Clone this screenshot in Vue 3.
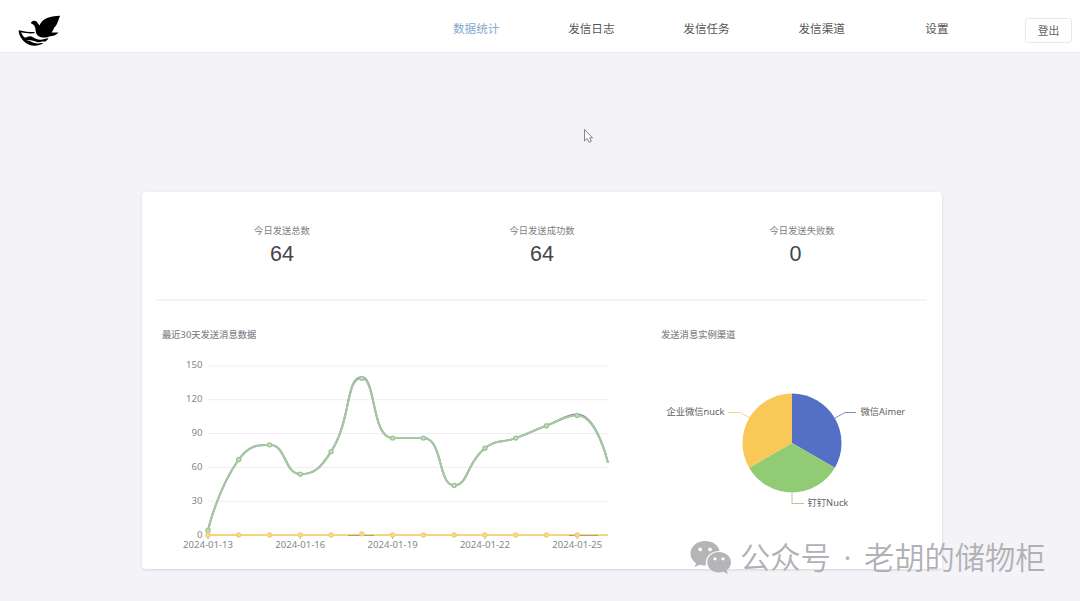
<script setup>
import { ref } from 'vue'

const menus = ['数据统计', '发信日志', '发信任务', '发信渠道', '设置']
const active = ref('数据统计')

const stats = [
  { label: '今日发送总数', value: 64 },
  { label: '今日发送成功数', value: 64 },
  { label: '今日发送失败数', value: 0, narrow: true }
]

const success = [4, 67, 80, 54, 74, 139, 86, 86, 44, 77, 86, 97, 106, 64]
const total = [4, 67, 80, 54, 74, 140, 86, 86, 44, 77, 86, 97, 107, 64]
const failed = [0, 0, 0, 0, 0, 1, 0, 0, 0, 0, 0, 0, 0, 0]
const failedLine = failed.map(() => 0)
const yTicks = [150, 120, 90, 60, 30, 0]
const xTicks = ['2024-01-13', '2024-01-16', '2024-01-19', '2024-01-22', '2024-01-25']

const px = (i) => 46 + i * 30.77
const py = (v) => 184 - v * 1.127
const toPoints = (list) => list.map((v, i) => ({ x: px(i), y: py(v) }))
const clamp = (v, a, b) => Math.max(Math.min(a, b), Math.min(v, Math.max(a, b)))

// smooth curve whose control points never overshoot the neighbours
const smoothPath = (list) => {
  const p = toPoints(list)
  let d = `M${p[0].x} ${p[0].y}`
  let cp = p[0]
  for (let i = 1; i < p.length; i++) {
    const prev = p[i - 1]
    const cur = p[i]
    const next = p[i + 1]
    let c1 = cur
    let c2 = cur
    if (next) {
      const lp = Math.hypot(cur.x - prev.x, cur.y - prev.y)
      const ln = Math.hypot(next.x - cur.x, next.y - cur.y)
      const k = (0.5 * ln) / (lp + ln)
      const nx = clamp(cur.x + (next.x - prev.x) * k, cur.x, next.x)
      const ny = clamp(cur.y + (next.y - prev.y) * k, cur.y, next.y)
      c1 = {
        x: clamp(cur.x - ((nx - cur.x) * lp) / ln, prev.x, cur.x),
        y: clamp(cur.y - ((ny - cur.y) * lp) / ln, prev.y, cur.y)
      }
      c2 = {
        x: cur.x + ((cur.x - c1.x) * ln) / lp,
        y: cur.y + ((cur.y - c1.y) * ln) / lp
      }
    }
    d += `C${cp.x} ${cp.y} ${c1.x} ${c1.y} ${cur.x} ${cur.y}`
    cp = c2
  }
  return d
}

const dots = (list) => toPoints(list).slice(0, -1)
</script>

<template>
  <div class="page">
    <header class="header">
      <svg class="logo" width="44" height="34" viewBox="0 0 44 34">
        <path d="M12.800 9.300C13.500 6.500 18 5.500 20 9.500L21.500 11.500C24 5 31 2 42.300 1.800C40.500 4 41 6 39.500 8.500C38.500 11 37.500 12.500 36 14C35.500 16 34.500 17 33.500 18.500L40.500 18.500C38 21.500 35 22 32 22.300C29 24 23 24 20.500 22C16.500 19.500 18.500 15 16.300 11.800C15.500 10.500 14.500 9.800 12.800 9.300Z" />
        <path d="M.7 16.200C6 17.500 11 18 16.300 18L16.800 19.300C12 19.700 7 19.300 3.200 18.300C3.800 20.500 5 22.200 7 23.700C9.500 23.200 11 21.500 13.500 22.500C17 24 19 25.800 22.500 25.800C25.500 25.800 27.500 24.500 30.500 24.300C29.500 26 28.500 27 27 27.700C24 27 22.500 28.700 19 28C15.500 27.300 12.500 25.500 8.500 26.300C12.500 26.500 15 29.500 19.500 29.500C21.500 29.500 23 28.800 25.500 29C19.500 33.200 10.500 32.500 5.500 27C2.500 23.800 .5 20 .7 16.200Z" />
      </svg>
      <nav class="menu">
        <a
          v-for="item in menus"
          :key="item"
          class="menu-item"
          :class="{ active: item === active }"
          @click="active = item"
        >{{ item }}</a>
      </nav>
      <button class="logout">登出</button>
    </header>

    <main class="card">
      <section class="stats">
        <div v-for="item in stats" :key="item.label" class="stat">
          <div class="stat-label">{{ item.label }}</div>
          <div class="stat-value" :class="{ narrow: item.narrow }">{{ item.value }}</div>
        </div>
      </section>

      <section class="charts">
        <div class="line-chart">
          <h3 class="title">最近30天发送消息数据</h3>
          <svg class="plot" width="470" height="206" viewBox="0 0 470 206">
            <g v-for="t in yTicks" :key="t">
              <line class="grid" x1="46" x2="446" :y1="py(t)" :y2="py(t)" />
              <text class="axis" x="40.500" :y="py(t) + 2.500" text-anchor="end">{{ t }}</text>
            </g>
            <g v-for="(t, i) in xTicks" :key="t">
              <line class="tick" :x1="px(i * 3)" :x2="px(i * 3)" y1="184" y2="188" />
              <text class="axis" :x="px(i * 3)" y="197.300" text-anchor="middle">{{ t }}</text>
            </g>
            <path class="line total" :d="smoothPath(total)" />
            <path class="line success" :d="smoothPath(success)" />
            <circle v-for="(p, i) in dots(success)" :key="i" class="dot success" :cx="p.x" :cy="p.y" r="2" />
            <path class="line failed" :d="smoothPath(failedLine)" />
            <path class="zero" d="M186 184.500H212M407 184.500H436" />
            <circle v-for="(p, i) in dots(failed)" :key="i" class="dot failed" :cx="p.x" :cy="p.y" r="2" />
          </svg>
        </div>

        <div class="pie-chart">
          <h3 class="title">发送消息实例渠道</h3>
          <svg class="plot" width="266" height="206" viewBox="0 0 266 206">
            <path fill="#5470c6" d="M131 92V42.500A49.500 49.500 0 0 1 173.870 116.750Z" />
            <path fill="#91cc75" d="M131 92L173.870 116.750A49.500 49.500 0 0 1 88.130 116.750Z" />
            <path fill="#fac858" d="M131 92L88.130 116.750A49.500 49.500 0 0 1 131 42.500Z" />
            <path class="leader" stroke="#7f91c4" d="M174 67L184 61.500H195" />
            <path class="leader" stroke="#a9cf98" d="M131 141.500V152.500H143" />
            <path class="leader" stroke="#f3d491" d="M89 67L79 61.500H67" />
            <text class="pie-label" x="199.500" y="64.300">微信Aimer</text>
            <text class="pie-label" x="146.500" y="155.300">钉钉Nuck</text>
            <text class="pie-label" x="63.500" y="64.300" text-anchor="end">企业微信nuck</text>
          </svg>
        </div>
      </section>
    </main>

    <svg class="cursor" width="12" height="16" viewBox="0 0 12 16">
      <path d="M1.500 1.500V13L4.200 10.500L6 14.300L8.300 13.300L6.700 9.800H9.500Z" />
    </svg>

    <div class="watermark">
      <svg width="42" height="36" viewBox="0 0 42 36">
        <path fill="#b5b5b8" fill-rule="evenodd" d="M15 1C7 1 .5 6.500.5 13.500C.5 17.500 2.500 21 6 23.300L4.700 27L9.700 24.700C11.500 25.300 13.500 25.600 16 25.500C14.500 17 21 11 29.500 11C28.500 5 22.500 1 15 1ZM10.200 7.500A1.900 1.900 0 1 1 10.200 11.300A1.900 1.900 0 1 1 10.200 7.500ZM20 7.500A1.900 1.900 0 1 1 20 11.300A1.900 1.900 0 1 1 20 7.500Z" />
        <path fill="#b5b5b8" fill-rule="evenodd" d="M29 12C22.500 12 17.300 16.500 17.300 22.300C17.300 28 22.500 32.500 29 32.500C30.500 32.500 32 32.200 33.300 31.800L37.700 34L36.700 30.300C39.500 28.300 41 25.500 41 22.300C41 16.500 35.500 12 29 12ZM25 17.200A1.600 1.600 0 1 1 25 20.400A1.600 1.600 0 1 1 25 17.200ZM33 17.200A1.600 1.600 0 1 1 33 20.400A1.600 1.600 0 1 1 33 17.200Z" />
      </svg>
      <span class="account">公众号</span>
      <span class="sep">·</span>
      <span class="account">老胡的储物柜</span>
    </div>
  </div>
</template>

<style>
body {
  background: #f3f3f8;
}
</style>

<style scoped>
.page {
  position: relative;
  height: 601px;
  overflow: hidden;
  background: #f3f3f8;
  font-family: "Noto Sans", "Noto Sans CJK SC", sans-serif;
}

.header {
  display: flex;
  align-items: center;
  height: 52px;
  box-sizing: border-box;
  padding: 8px 8px 0 18px;
  background: #fff;
  box-shadow: 0 1px 1px #ebebef;
}

.logo {
  flex: none;
  margin-top: 2px;
}

.menu {
  display: flex;
  margin-left: auto;
  margin-right: 30.5px;
  margin-top: -2px;
}

.menu-item {
  width: 115.2px;
  text-align: center;
  font-size: 11.6px;
  line-height: 18px;
  color: #555;
  cursor: pointer;
}

.menu-item.active {
  color: #83a9cf;
}

.logout {
  width: 47px;
  height: 25px;
  padding: 0;
  border: 1px solid #e9e9ec;
  border-radius: 3px;
  background: #fff;
  font-family: inherit;
  font-size: 10.8px;
  color: #666;
}

.card {
  width: 800px;
  height: 377px;
  box-sizing: border-box;
  margin: 140px 0 0 142px;
  padding: 0 15px;
  background: #fff;
  border-radius: 4px;
  box-shadow: 0 1px 3px rgba(0, 0, 0, 0.12);
}

.stats {
  display: flex;
  height: 109px;
  padding: 31px 0 0;
  margin-bottom: 26px;
  box-sizing: border-box;
  border-bottom: 2px solid #f3f3f5;
  justify-content: center;
}

.stat {
  width: 260px;
  flex: none;
  text-align: center;
}

.stat-label {
  font-size: 9.3px;
  line-height: 16px;
  color: #808080;
}

.stat-value {
  font-family: "Liberation Sans", Arial, sans-serif;
  font-size: 21.5px;
  line-height: 30px;
  color: #45454a;
}

.stat-value.narrow {
  padding-right: 13px;
}

.charts {
  display: flex;
}

.line-chart {
  flex: none;
  width: 499px;
  box-sizing: border-box;
  padding-left: 5px;
  margin-right: 5px;
}

.title {
  margin: 0;
  height: 16px;
  font-size: 9.3px;
  font-weight: 500;
  line-height: 16px;
  color: #85858a;
}

.plot {
  display: block;
  margin-top: 8px;
}

.grid {
  stroke: #eeeef1;
  stroke-width: 1;
}

.tick {
  stroke: #a5a5a5;
}

.axis {
  font-size: 9.6px;
  fill: #85878c;
}

.line {
  fill: none;
  stroke-width: 2;
}

.line.total {
  stroke: #8c8fa0;
}

.line.success {
  stroke: #a5c9a0;
}

.line.failed {
  stroke: #f5d480;
}

.zero {
  stroke: #aaa084;
}

.dot {
  fill: #cfe0c8;
  stroke-width: 1.4;
}

.dot.success {
  stroke: #9cc693;
}

.dot.failed {
  fill: #f4dc9e;
  stroke: #f3cf72;
}

.pie-chart {
  flex: none;
}

.leader {
  fill: none;
  stroke-width: 1;
}

.pie-label {
  font-size: 9.3px;
  fill: #606060;
}

.cursor {
  position: absolute;
  left: 583px;
  top: 128px;
}

.cursor path {
  fill: #fff;
  stroke: #777;
  stroke-width: 0.9;
}

.watermark {
  position: absolute;
  left: 690px;
  top: 539.5px;
  display: flex;
  align-items: center;
  height: 36px;
  font-family: "Noto Sans CJK SC", sans-serif;
  color: #b1b1b5;
}

.account {
  font-size: 30.3px;
  font-weight: 350;
  line-height: 36px;
  white-space: nowrap;
  margin-top: -4px;
}

.watermark svg + .account {
  margin-left: 8px;
}

.sep {
  width: 33px;
  margin-top: -2px;
  font-family: "Noto Sans", sans-serif;
  font-size: 28px;
  line-height: 36px;
  text-align: center;
}
</style>
